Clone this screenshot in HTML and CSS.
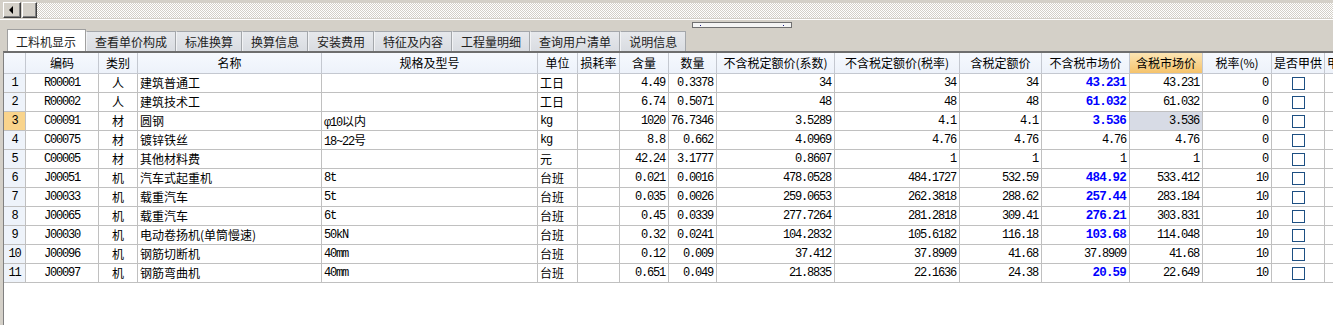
FILE: index.html
```html
<!DOCTYPE html>
<html lang="zh-CN">
<head>
<meta charset="utf-8">
<title>工料机显示</title>
<link rel="stylesheet" href="styles.css">
</head>
<body>
<div class="top">
  <div class="hbar">
    <div class="sbtn"><span class="arrow-left"></span></div>
    <div class="sbtn thumb"></div>
    <div class="track"></div>
  </div>
</div>
<div class="splitrow"><div class="handle"><i></i><i></i></div></div>
<div class="tabs">
  <div class="tab active">工料机显示</div>
  <div class="tab">查看单价构成</div>
  <div class="tab">标准换算</div>
  <div class="tab">换算信息</div>
  <div class="tab">安装费用</div>
  <div class="tab">特征及内容</div>
  <div class="tab">工程量明细</div>
  <div class="tab">查询用户清单</div>
  <div class="tab">说明信息</div>
</div>
<div class="gridwrap">
  <div class="grid">
    <div class="h"></div><div class="h">编码</div><div class="h">类别</div><div class="h">名称</div><div class="h">规格及型号</div><div class="h">单位</div><div class="h">损耗率</div><div class="h">含量</div><div class="h">数量</div><div class="h">不含税定额价(系数)</div><div class="h">不含税定额价(税率)</div><div class="h">含税定额价</div><div class="h">不含税市场价</div><div class="h hot">含税市场价</div><div class="h">税率(%)</div><div class="h">是否甲供</div><div class="h hl">甲供数量</div>

    <div class="rn">1</div><div class="c n">R00001</div><div class="c">人</div><div class="l">建筑普通工</div><div class="l"></div><div class="l">工日</div><div></div><div class="r n">4.49</div><div class="r n">0.3378</div><div class="r n">34</div><div class="r n">34</div><div class="r n">34</div><div class="r n b">43.231</div><div class="r n">43.231</div><div class="r n">0</div><div class="cb"><span class="box"></span></div><div></div>

    <div class="rn">2</div><div class="c n">R00002</div><div class="c">人</div><div class="l">建筑技术工</div><div class="l"></div><div class="l">工日</div><div></div><div class="r n">6.74</div><div class="r n">0.5071</div><div class="r n">48</div><div class="r n">48</div><div class="r n">48</div><div class="r n b">61.032</div><div class="r n">61.032</div><div class="r n">0</div><div class="cb"><span class="box"></span></div><div></div>

    <div class="rn cur">3</div><div class="c n">C00091</div><div class="c">材</div><div class="l">圆钢</div><div class="l"><span class="n">φ10</span>以内</div><div class="l n">kg</div><div></div><div class="r n">1020</div><div class="r n">76.7346</div><div class="r n">3.5289</div><div class="r n">4.1</div><div class="r n">4.1</div><div class="r n b">3.536</div><div class="r n sel">3.536</div><div class="r n">0</div><div class="cb"><span class="box"></span></div><div></div>

    <div class="rn">4</div><div class="c n">C00075</div><div class="c">材</div><div class="l">镀锌铁丝</div><div class="l"><span class="n">18~22</span>号</div><div class="l n">kg</div><div></div><div class="r n">8.8</div><div class="r n">0.662</div><div class="r n">4.0969</div><div class="r n">4.76</div><div class="r n">4.76</div><div class="r n">4.76</div><div class="r n">4.76</div><div class="r n">0</div><div class="cb"><span class="box"></span></div><div></div>

    <div class="rn">5</div><div class="c n">C00005</div><div class="c">材</div><div class="l">其他材料费</div><div class="l"></div><div class="l">元</div><div></div><div class="r n">42.24</div><div class="r n">3.1777</div><div class="r n">0.8607</div><div class="r n">1</div><div class="r n">1</div><div class="r n">1</div><div class="r n">1</div><div class="r n">0</div><div class="cb"><span class="box"></span></div><div></div>

    <div class="rn">6</div><div class="c n">J00051</div><div class="c">机</div><div class="l">汽车式起重机</div><div class="l n">8t</div><div class="l">台班</div><div></div><div class="r n">0.021</div><div class="r n">0.0016</div><div class="r n">478.0528</div><div class="r n">484.1727</div><div class="r n">532.59</div><div class="r n b">484.92</div><div class="r n">533.412</div><div class="r n">10</div><div class="cb"><span class="box"></span></div><div></div>

    <div class="rn">7</div><div class="c n">J00033</div><div class="c">机</div><div class="l">载重汽车</div><div class="l n">5t</div><div class="l">台班</div><div></div><div class="r n">0.035</div><div class="r n">0.0026</div><div class="r n">259.0653</div><div class="r n">262.3818</div><div class="r n">288.62</div><div class="r n b">257.44</div><div class="r n">283.184</div><div class="r n">10</div><div class="cb"><span class="box"></span></div><div></div>

    <div class="rn">8</div><div class="c n">J00065</div><div class="c">机</div><div class="l">载重汽车</div><div class="l n">6t</div><div class="l">台班</div><div></div><div class="r n">0.45</div><div class="r n">0.0339</div><div class="r n">277.7264</div><div class="r n">281.2818</div><div class="r n">309.41</div><div class="r n b">276.21</div><div class="r n">303.831</div><div class="r n">10</div><div class="cb"><span class="box"></span></div><div></div>

    <div class="rn">9</div><div class="c n">J00030</div><div class="c">机</div><div class="l">电动卷扬机(单筒慢速)</div><div class="l n">50kN</div><div class="l">台班</div><div></div><div class="r n">0.32</div><div class="r n">0.0241</div><div class="r n">104.2832</div><div class="r n">105.6182</div><div class="r n">116.18</div><div class="r n b">103.68</div><div class="r n">114.048</div><div class="r n">10</div><div class="cb"><span class="box"></span></div><div></div>

    <div class="rn">10</div><div class="c n">J00096</div><div class="c">机</div><div class="l">钢筋切断机</div><div class="l n">40mm</div><div class="l">台班</div><div></div><div class="r n">0.12</div><div class="r n">0.009</div><div class="r n">37.412</div><div class="r n">37.8909</div><div class="r n">41.68</div><div class="r n">37.8909</div><div class="r n">41.68</div><div class="r n">10</div><div class="cb"><span class="box"></span></div><div></div>

    <div class="rn">11</div><div class="c n">J00097</div><div class="c">机</div><div class="l">钢筋弯曲机</div><div class="l n">40mm</div><div class="l">台班</div><div></div><div class="r n">0.651</div><div class="r n">0.049</div><div class="r n">21.8835</div><div class="r n">22.1636</div><div class="r n">24.38</div><div class="r n b">20.59</div><div class="r n">22.649</div><div class="r n">10</div><div class="cb"><span class="box"></span></div><div></div>
  </div>
</div>
</body>
</html>
```

FILE: styles.css
```css
* { box-sizing: border-box; }
html, body { margin: 0; padding: 0; }
body {
  width: 1333px;
  height: 325px;
  overflow: hidden;
  background: #d4d0c8;
  font-family: "Noto Sans CJK SC", sans-serif;
  font-size: 12px;
  color: #000;
  display: flex;
  flex-direction: column;
}

/* top horizontal scrollbar */
.top {
  height: 20px;
  padding-top: 2px;
  border-bottom: 1px solid #ffffff;
  flex: none;
}
.hbar {
  display: flex;
  height: 16px;
  padding-left: 3px;
}
.sbtn {
  width: 18px;
  height: 16px;
  background: #d4d0c8;
  border: 1px solid;
  border-color: #ffffff #404040 #404040 #ffffff;
  box-shadow: inset -1px -1px #808080;
  display: flex;
  align-items: center;
  justify-content: center;
  flex: none;
}
.sbtn.thumb { width: 15px; margin-left: 1px; }
.arrow-left {
  width: 0;
  height: 0;
  border-top: 4px solid transparent;
  border-bottom: 4px solid transparent;
  border-right: 4px solid #000;
  margin-right: 2px;
}
.track {
  flex: 1;
  margin-top: 1px;
  height: 15px;
  background: repeating-conic-gradient(#ffffff 0 25%, #d4d0c8 0 50%) 0 0 / 2px 2px;
}

/* splitter */
.splitrow {
  height: 9px;
  flex: none;
  padding-top: 2px;
  padding-left: 692px;
}
.handle {
  width: 100px;
  height: 6px;
  border: 1px solid #707070;
  background: #f4f4f4;
  display: flex;
  align-items: center;
  justify-content: space-between;
  padding: 0 7px;
}
.handle i {
  display: block;
  width: 1px;
  height: 1px;
  background: #1a1a80;
}

/* tabs */
.tabs {
  height: 22px;
  flex: none;
  display: flex;
  align-items: flex-end;
  padding-left: 7px;
}
.tab {
  height: 20px;
  line-height: 19px;
  padding: 0 8px;
  background: linear-gradient(#e6e8ec, #d9dce1);
  border: 1px solid #a4a7ab;
  border-bottom: none;
  border-left-color: #f2f3f5;
  color: #222;
  white-space: nowrap;
}
.tab.active {
  height: 22px;
  line-height: 24px;
  background: #ffffff;
  border-color: #a0a0a0;
  padding: 0 9px 0 8px;
}

/* grid */
.gridwrap {
  flex: 1;
  margin-left: 3px;
  background: #ffffff;
  border-top: 2px solid #6e6e6e;
  border-left: 1px solid #808080;
  overflow: hidden;
}
.grid {
  display: grid;
  width: max-content;
  grid-template-columns: 22px 73px 39px 184px 216px 40px 42px 49px 48px 118px 125px 82px 88px 73px 69px 53px 60px;
  grid-template-rows: 21px;
  grid-auto-rows: 19px;
}
.grid > div {
  border-right: 1px solid #c0c0c0;
  border-bottom: 1px solid #c0c0c0;
  white-space: nowrap;
  overflow: hidden;
  line-height: 18px;
}
.grid > .h {
  background: linear-gradient(#f6f9fe, #edf2fa);
  border-right-color: #c4c8d0;
  border-bottom-color: #c4c8d0;
  text-align: center;
  line-height: 20px;
}
.grid > .h.hot {
  background: linear-gradient(#fce5b4, #f5c36c);
}
.grid > .h.hl { text-align: left; padding-left: 2px; }
.grid > .rn {
  background: #eef3fa;
  text-align: center;
  font-family: "Liberation Mono", monospace;
  letter-spacing: -1.2px;
}
.grid > .rn.cur { background: #f9d48c; }
.c { text-align: center; }
.l { text-align: left; padding-left: 2px; }
.r { text-align: right; padding-right: 3px; }
.n {
  font-family: "Liberation Mono", monospace;
  letter-spacing: -1.2px;
}
.b {
  color: #0000ff;
  font-weight: bold;
  font-size: 12.5px;
  letter-spacing: -0.8px;
}
.grid > .sel { background: #d7dbe5; }
.grid > .cb {
  display: flex;
  align-items: center;
  justify-content: center;
}
.box {
  display: block;
  width: 13px;
  height: 13px;
  border: 1px solid #1d4f82;
  background: #ffffff;
}
```
